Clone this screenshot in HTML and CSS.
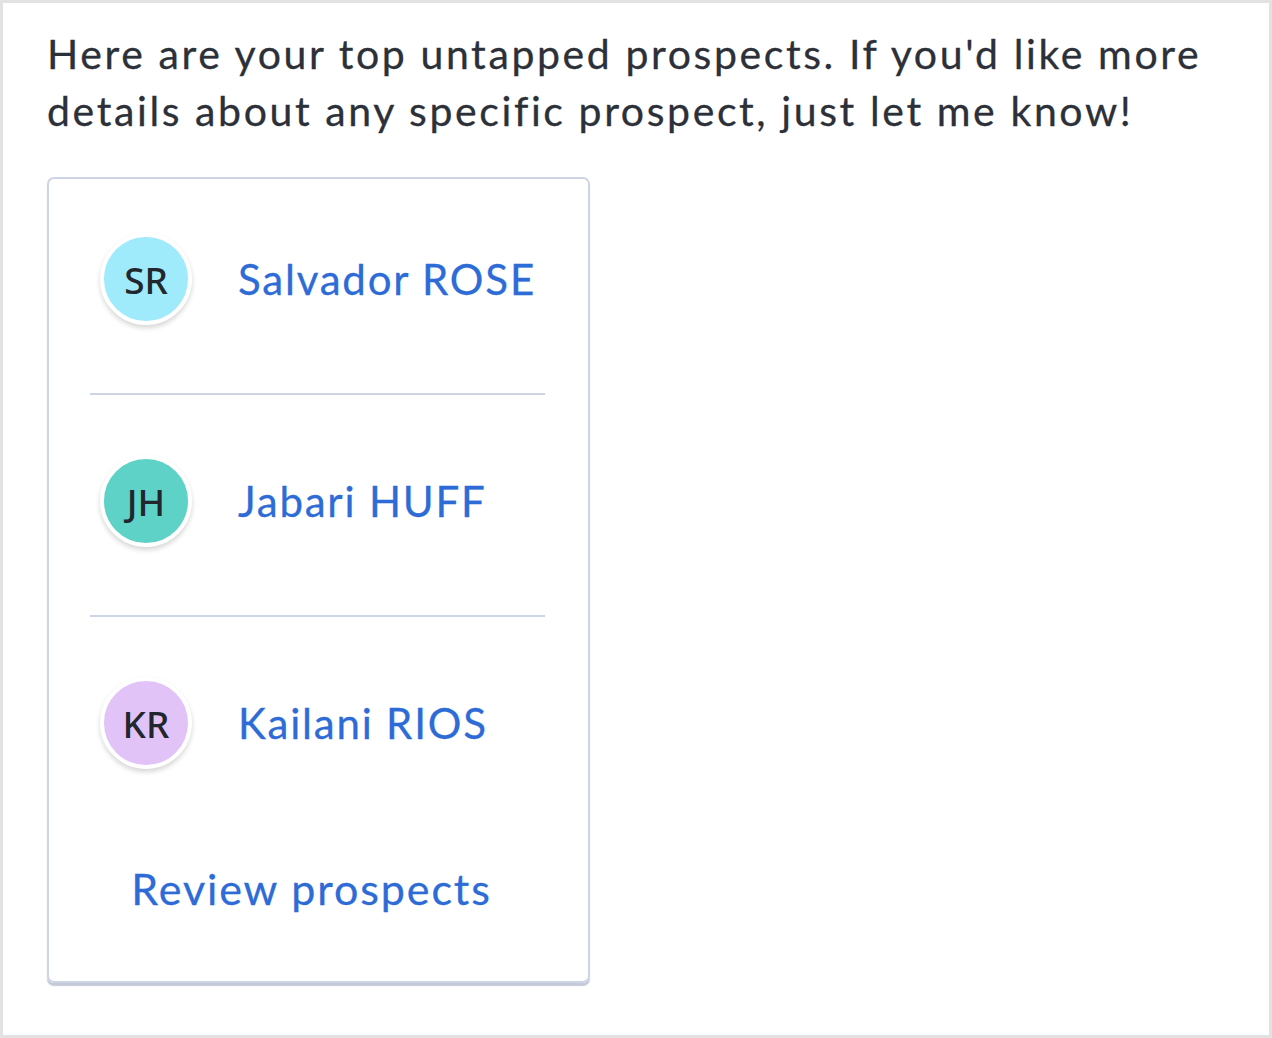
FILE: index.html
```html
<!DOCTYPE html>
<html>
<head>
<meta charset="utf-8">
<link rel="stylesheet" href="styles.css">
</head>
<body>
<div class="frame">
  <p class="intro">Here are your top untapped prospects. If you'd like more details about any specific prospect, just let me know!</p>
  <div class="card">
    <div class="row">
      <div class="avatar av-sr">SR</div>
      <a class="name">Salvador ROSE</a>
    </div>
    <div class="row">
      <div class="avatar av-jh">JH</div>
      <a class="name">Jabari HUFF</a>
    </div>
    <div class="row">
      <div class="avatar av-kr">KR</div>
      <a class="name">Kailani RIOS</a>
    </div>
    <div class="review"><a class="review-link">Review prospects</a></div>
  </div>
</div>
</body>
</html>
```

FILE: styles.css
```css
html, body {
  margin: 0;
  padding: 0;
  background: #e2e2e2;
}
body {
  width: 1272px;
  height: 1038px;
  box-sizing: border-box;
  padding: 3px;
  font-family: Lato, "Open Sans", sans-serif;
}
.frame {
  background: #ffffff;
  height: 100%;
  box-sizing: border-box;
  padding: 22px 30px 0 44px;
}
.intro {
  margin: 0;
  font-size: 41px;
  line-height: 57px;
  letter-spacing: 2.6px;
  color: #2c3038;
  -webkit-text-stroke: 0.3px #2c3038;
}
.card {
  margin-top: 38px;
  width: 543px;
  box-sizing: border-box;
  border: 2px solid #cdd4e6;
  border-radius: 7px;
  box-shadow: 0 3px 1px #c3c9d6;
  padding: 0 43px 0 41px;
}
.row {
  display: flex;
  align-items: center;
  gap: 46px;
  padding: 60px 0 68px 10px;
  border-bottom: 2px solid #cdd4e4;
}
.row:first-child {
  padding-top: 54px;
}
.row:nth-child(3) {
  border-bottom: none;
}
.avatar {
  width: 84px;
  height: 84px;
  flex: none;
  border-radius: 50%;
  border: 4px solid #ffffff;
  box-shadow: 0 3px 5px rgba(0, 0, 0, 0.16);
  display: flex;
  align-items: center;
  justify-content: center;
  font-family: "Noto Sans", sans-serif;
  font-size: 37px;
  font-weight: 500;
  color: #22262d;
}
.av-sr { background: #9feafb; }
.av-jh { background: #5ed2c6; }
.av-kr { background: #e1c3f8; }
.name {
  font-size: 42px;
  letter-spacing: 1.8px;
  white-space: nowrap;
  color: #2d6bd6;
  -webkit-text-stroke: 0.3px #2d6bd6;
}
.review {
  text-align: center;
  padding: 22px 12px 52px 0;
  line-height: 60px;
}
.review-link {
  font-size: 43px;
  letter-spacing: 1.9px;
  white-space: nowrap;
  color: #2d6bd6;
  -webkit-text-stroke: 0.3px #2d6bd6;
}
```
